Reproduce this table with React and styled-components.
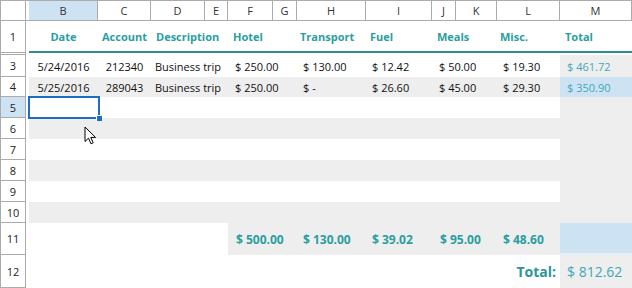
import React from "react";
import styled, { createGlobalStyle } from "styled-components";

const GlobalStyle = createGlobalStyle`
  body {
    margin: 0;
    background: #fff;
    font-family: "Open Sans", "Noto Sans", sans-serif;
  }
`;

const GRID_LINE = "#ababab";
const TEAL = "#2a9ea1";
const TEAL_LIGHT = "#42a8b6";
const SHADE = "#eeeeee";
const PICK = "#cde3f3";

const letters = [
  { l: "", w: 3 },
  { l: "B", w: 69, active: true },
  { l: "C", w: 53 },
  { l: "D", w: 54 },
  { l: "E", w: 23 },
  { l: "F", w: 45 },
  { l: "G", w: 24 },
  { l: "H", w: 69 },
  { l: "I", w: 66 },
  { l: "J", w: 24 },
  { l: "K", w: 41 },
  { l: "L", w: 63 },
  { l: "M", w: 72 },
];

// merged body columns: B C D-E F-G H I J-K L M
const columns = [
  { align: "center", pad: 0, headPad: 0 },
  { align: "center", pad: 0, headPad: 0 },
  { align: "left", pad: 4, headPad: 5 },
  { align: "left", pad: 7, headPad: 5 },
  { align: "left", pad: 6, headPad: 3 },
  { align: "left", pad: 6, headPad: 4 },
  { align: "left", pad: 7, headPad: 5 },
  { align: "left", pad: 6, headPad: 3 },
  { align: "left", pad: 7, headPad: 5 },
];

const headings = ["Date", "Account", "Description", "Hotel", "Transport", "Fuel", "Meals", "Misc.", "Total"];

const expenses = [
  { n: 3, h: 22, cells: ["5/24/2016", "212340", "Business trip", "$ 250.00", "$ 130.00", "$ 12.42", "$ 50.00", "$ 19.30", "$ 461.72"] },
  { n: 4, h: 20, shade: true, pick: true, cells: ["5/25/2016", "289043", "Business trip", "$ 250.00", "$  -", "$ 26.60", "$ 45.00", "$ 29.30", "$ 350.90"] },
];

const emptyRows = [
  { n: 5, h: 21, active: true },
  { n: 6, h: 21, shade: true },
  { n: 7, h: 21 },
  { n: 8, h: 21, shade: true },
  { n: 9, h: 21 },
  { n: 10, h: 21, shade: true },
];

const sums = ["$ 500.00", "$ 130.00", "$ 39.02", "$ 95.00", "$ 48.60"];

const Sheet = styled.div`
  position: relative;
  width: 632px;
  height: 288px;
  overflow: hidden;
  font-size: 11px;
  color: #111;
`;

const HeaderRow = styled.div`
  display: grid;
  grid-template-columns: 26px ${letters.map((c) => c.w + "px").join(" ")};
  height: 21px;
  box-sizing: border-box;
  border-top: 1px solid ${GRID_LINE};
  border-bottom: 1px solid ${GRID_LINE};
`;

const Corner = styled.div`
  border-left: 1px solid ${GRID_LINE};
  border-right: 1px solid ${GRID_LINE};
`;

const ColHead = styled.div`
  display: flex;
  align-items: center;
  justify-content: center;
  background: ${(p) => (p.$active ? PICK : "#fff")};
  border-right: ${(p) => (p.$blank ? "none" : `1px solid ${GRID_LINE}`)};
  color: #333;
  font-size: 11px;
`;

const Row = styled.div`
  display: grid;
  grid-template-columns: 26px 3px 69px 53px 77px 69px 69px 66px 65px 63px 72px;
  height: ${(p) => p.$h}px;
`;

const RowHead = styled.div`
  display: flex;
  align-items: center;
  justify-content: center;
  box-sizing: border-box;
  border-left: 1px solid ${GRID_LINE};
  border-right: 1px solid ${GRID_LINE};
  border-bottom: 1px solid ${GRID_LINE};
  background: ${(p) => (p.$active ? PICK : "#fff")};
  color: #222;
  font-size: 11px;
`;

const Cell = styled.div`
  position: relative;
  display: flex;
  align-items: center;
  justify-content: ${(p) => (p.$align === "center" ? "center" : "flex-start")};
  padding-left: ${(p) => p.$pad || 0}px;
  background: ${(p) => p.$bg || "#fff"};
  white-space: nowrap;
`;

const HeadCell = styled(Cell)`
  box-sizing: border-box;
  padding-top: 1px;
  border-bottom: 2px solid #2b8f90;
  color: ${TEAL};
  font-weight: 700;
`;

const SumValue = styled.span`
  color: ${TEAL};
  font-weight: 700;
  font-size: 12px;
`;

const TotalLabel = styled.span`
  margin-left: auto;
  padding-right: 4px;
  color: #2a9698;
  font-weight: 700;
  font-size: 14px;
`;

const TotalValue = styled.span`
  color: ${TEAL_LIGHT};
  font-size: 14px;
`;

const SideValue = styled.span`
  color: ${TEAL_LIGHT};
`;

const Selected = styled(Cell)`
  z-index: 3;
  &::after {
    content: "";
    position: absolute;
    top: -1px;
    left: -1px;
    right: -2px;
    bottom: -1px;
    border: 2px solid #1b6ec4;
  }
  &::before {
    content: "";
    position: absolute;
    right: -4px;
    bottom: -3px;
    width: 5px;
    height: 5px;
    background: #1b6ec4;
    border-left: 1px solid #fff;
    border-top: 1px solid #fff;
    z-index: 1;
  }
`;

const Pointer = styled.svg`
  position: absolute;
  left: 84px;
  top: 126px;
  z-index: 4;
`;

function ExpenseSheet() {
  return (
    <Sheet>
      <HeaderRow>
        <Corner />
        {letters.map((c, i) => (
          <ColHead key={i} $active={c.active} $blank={!c.l}>
            {c.l}
          </ColHead>
        ))}
      </HeaderRow>

      <Row $h={32}>
        <RowHead>1</RowHead>
        <Cell />
        {headings.map((t, i) => (
          <HeadCell key={t} $align={columns[i].align} $pad={columns[i].headPad}>
            {t}
          </HeadCell>
        ))}
      </Row>

      <Row $h={2}>
        <RowHead />
      </Row>

      {expenses.map((r) => (
        <Row key={r.n} $h={r.h}>
          <RowHead>{r.n}</RowHead>
          <Cell />
          {r.cells.map((t, i) => {
            const last = i === r.cells.length - 1;
            const bg = last ? (r.pick ? PICK : SHADE) : r.shade ? SHADE : "#fff";
            return (
              <Cell key={i} $align={columns[i].align} $pad={columns[i].pad} $bg={bg}>
                {last ? <SideValue>{t}</SideValue> : t}
              </Cell>
            );
          })}
        </Row>
      ))}

      {emptyRows.map((r) => (
        <Row key={r.n} $h={r.h}>
          <RowHead $active={r.active}>{r.n}</RowHead>
          <Cell />
          {columns.map((c, i) => {
            const last = i === columns.length - 1;
            const bg = last || r.shade ? SHADE : "#fff";
            if (r.active && i === 0) return <Selected key={i} $bg={bg} />;
            return <Cell key={i} $bg={bg} />;
          })}
        </Row>
      ))}

      <Row $h={32}>
        <RowHead>11</RowHead>
        <Cell />
        <Cell />
        <Cell />
        <Cell />
        {sums.map((t, i) => (
          <Cell key={t} $pad={[8, 6, 6, 8, 6][i]} $bg={SHADE}>
            <SumValue>{t}</SumValue>
          </Cell>
        ))}
        <Cell $bg={PICK} style={{ boxShadow: "inset 0 -2px 0 #e4eef5" }} />
      </Row>

      <Row $h={33}>
        <RowHead>12</RowHead>
        <Cell />
        <Cell />
        <Cell />
        <Cell />
        <Cell />
        <Cell />
        <Cell />
        <Cell />
        <Cell>
          <TotalLabel>Total:</TotalLabel>
        </Cell>
        <Cell $pad={7} $bg={SHADE}>
          <TotalValue>$ 812.62</TotalValue>
        </Cell>
      </Row>

      <Pointer width="14" height="20" viewBox="0 0 14 20">
        <path
          d="M1 1 L1 15.5 L4.5 12.2 L7 17.8 L9.2 16.8 L6.8 11.4 L11.5 11.4 Z"
          fill="#fff"
          stroke="#000"
          strokeWidth="1"
          strokeLinejoin="miter"
        />
      </Pointer>
    </Sheet>
  );
}

export default function App() {
  return (
    <>
      <GlobalStyle />
      <ExpenseSheet />
    </>
  );
}
